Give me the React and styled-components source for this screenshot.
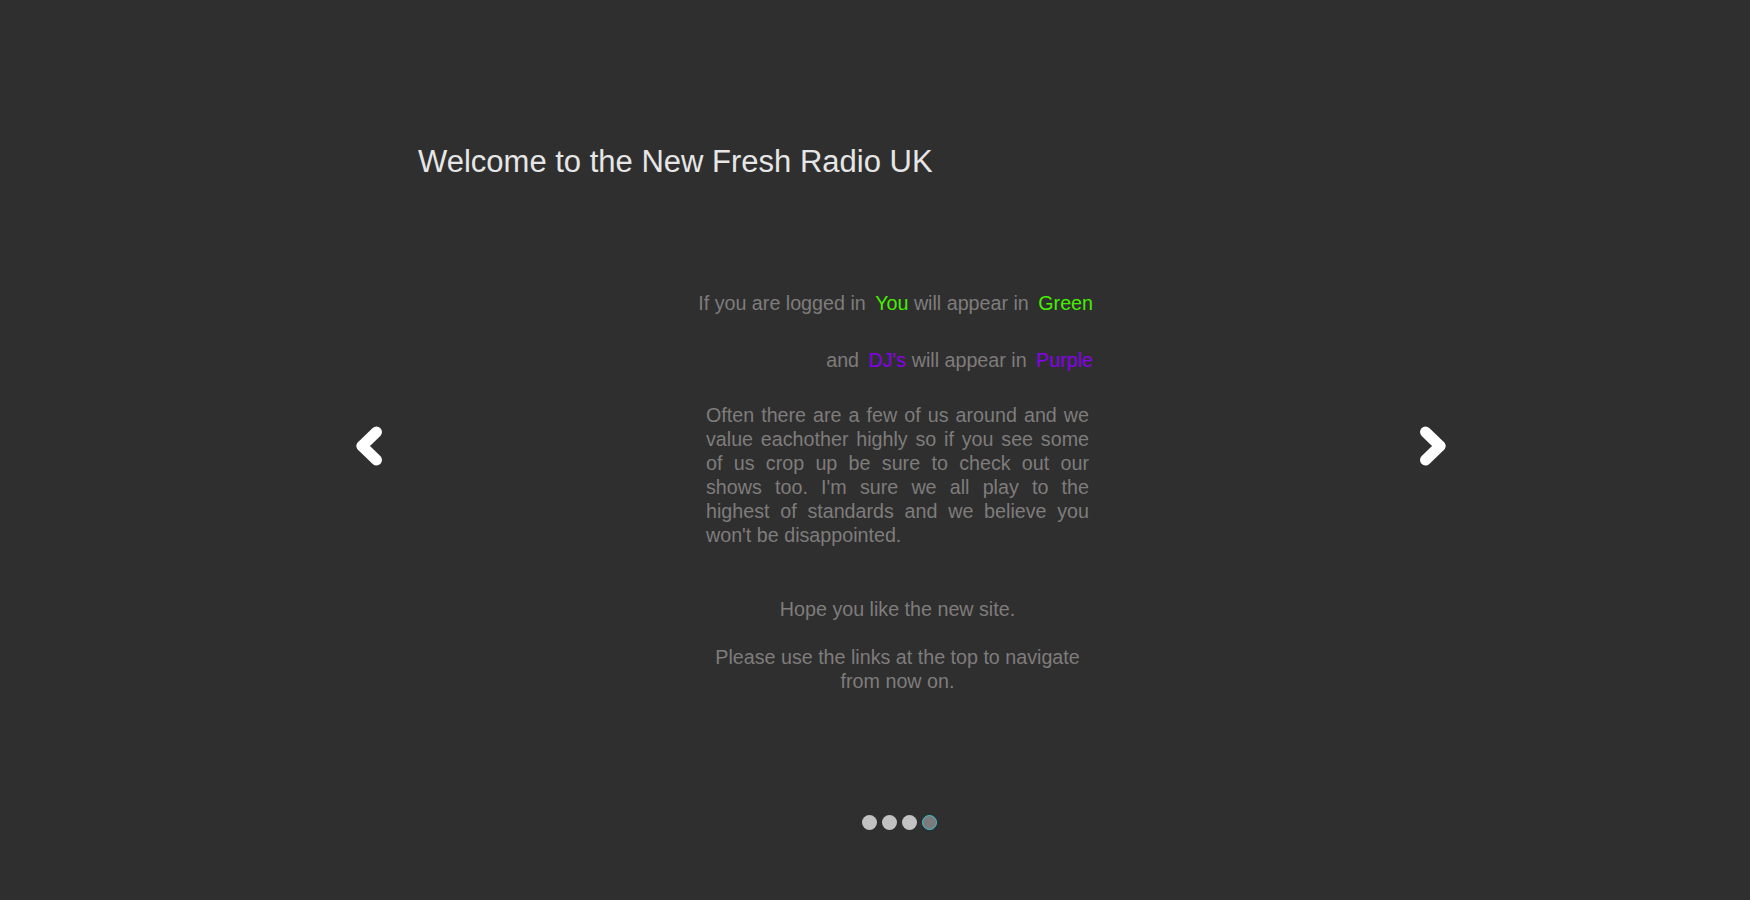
import React from 'react';
import styled, { createGlobalStyle } from 'styled-components';

const Global = createGlobalStyle`
  body {
    margin: 0;
    background: #2f2f2f;
    font-family: 'Liberation Sans', Arial, sans-serif;
  }
`;

const Page = styled.div`
  width: 1750px;
  height: 900px;
  box-sizing: border-box;
  padding: 100px 0 0 48px;
`;

const Carousel = styled.div`
  position: relative;
  width: 1120px;
  height: 692px;
  margin: 0 auto;
  box-sizing: border-box;
  padding-top: 45px;
`;

const Title = styled.h1`
  margin: 0 0 0 79px;
  font-size: 31px;
  line-height: 34px;
  font-weight: normal;
  color: #e6e6e6;
`;

const Content = styled.div`
  width: 383px;
  margin: 112px 0 0 367px;
  font-size: 19.7px;
  line-height: 24px;
  color: #7f7c7c;
`;

const ColourLine = styled.div`
  text-align: right;
  white-space: nowrap;
  margin: ${p => p.$top || 0}px -4px 0 -40px;
`;

const Hl = styled.span`
  margin-left: 4px;
  color: ${p => (p.$purple ? '#8800ee' : '#46ee00')};
`;

const Para = styled.p`
  margin: 31px 0 0;
  text-align: justify;
`;

const Centered = styled.p`
  margin: 50px 0 0;
  text-align: center;
`;

const Arrow = styled.button`
  position: absolute;
  top: 50%;
  transform: translateY(-50%);
  ${p => (p.$right ? 'right: 13px;' : 'left: 17px;')}
  width: 26px;
  height: 40px;
  padding: 0;
  border: none;
  background: none;
  cursor: pointer;
  svg { display: block; }
`;

const Dots = styled.div`
  display: flex;
  justify-content: center;
  gap: 5px;
  margin-top: 23px;
`;

const Dot = styled.span`
  width: 15px;
  height: 15px;
  border-radius: 50%;
  box-sizing: border-box;
  background: ${p => (p.$active ? '#7b7b7b' : '#c2c2c2')};
  border: ${p => (p.$active ? '1px solid #3cc4d6' : 'none')};
`;

const Chevron = ({ flip }) => (
  <svg width="26" height="40" viewBox="0 0 26 40" style={flip ? { transform: 'scaleX(-1)' } : undefined}>
    <path d="M20.5 6 L6 20" stroke="#fff" strokeWidth="11" strokeLinecap="round" fill="none" />
    <path d="M6 20 L20.5 34" stroke="#fff" strokeWidth="11" strokeLinecap="round" fill="none" />
  </svg>
);

const App = () => {
  return (
    <Page>
      <Global />
      <Carousel>
        <Title>Welcome to the New Fresh Radio UK</Title>
        <Content>
          <ColourLine>
            If you are logged in <Hl>You</Hl> will appear in <Hl>Green</Hl>
          </ColourLine>
          <ColourLine $top={33}>
            and <Hl $purple>DJ's</Hl> will appear in <Hl $purple>Purple</Hl>
          </ColourLine>
          <Para>
            Often there are a few of us around and we value eachother highly so if you see some
            of us crop up be sure to check out our shows too. I'm sure we all play to the highest
            of standards and we believe you won't be disappointed.
          </Para>
          <Centered>
            Hope you like the new site.
            <br />
            <br />
            Please use the links at the top to navigate from now on.
          </Centered>
        </Content>
        <Arrow aria-label="previous">
          <Chevron />
        </Arrow>
        <Arrow $right aria-label="next">
          <Chevron flip />
        </Arrow>
      </Carousel>
      <Dots>
        <Dot />
        <Dot />
        <Dot />
        <Dot $active />
      </Dots>
    </Page>
  );
};

export default App;
